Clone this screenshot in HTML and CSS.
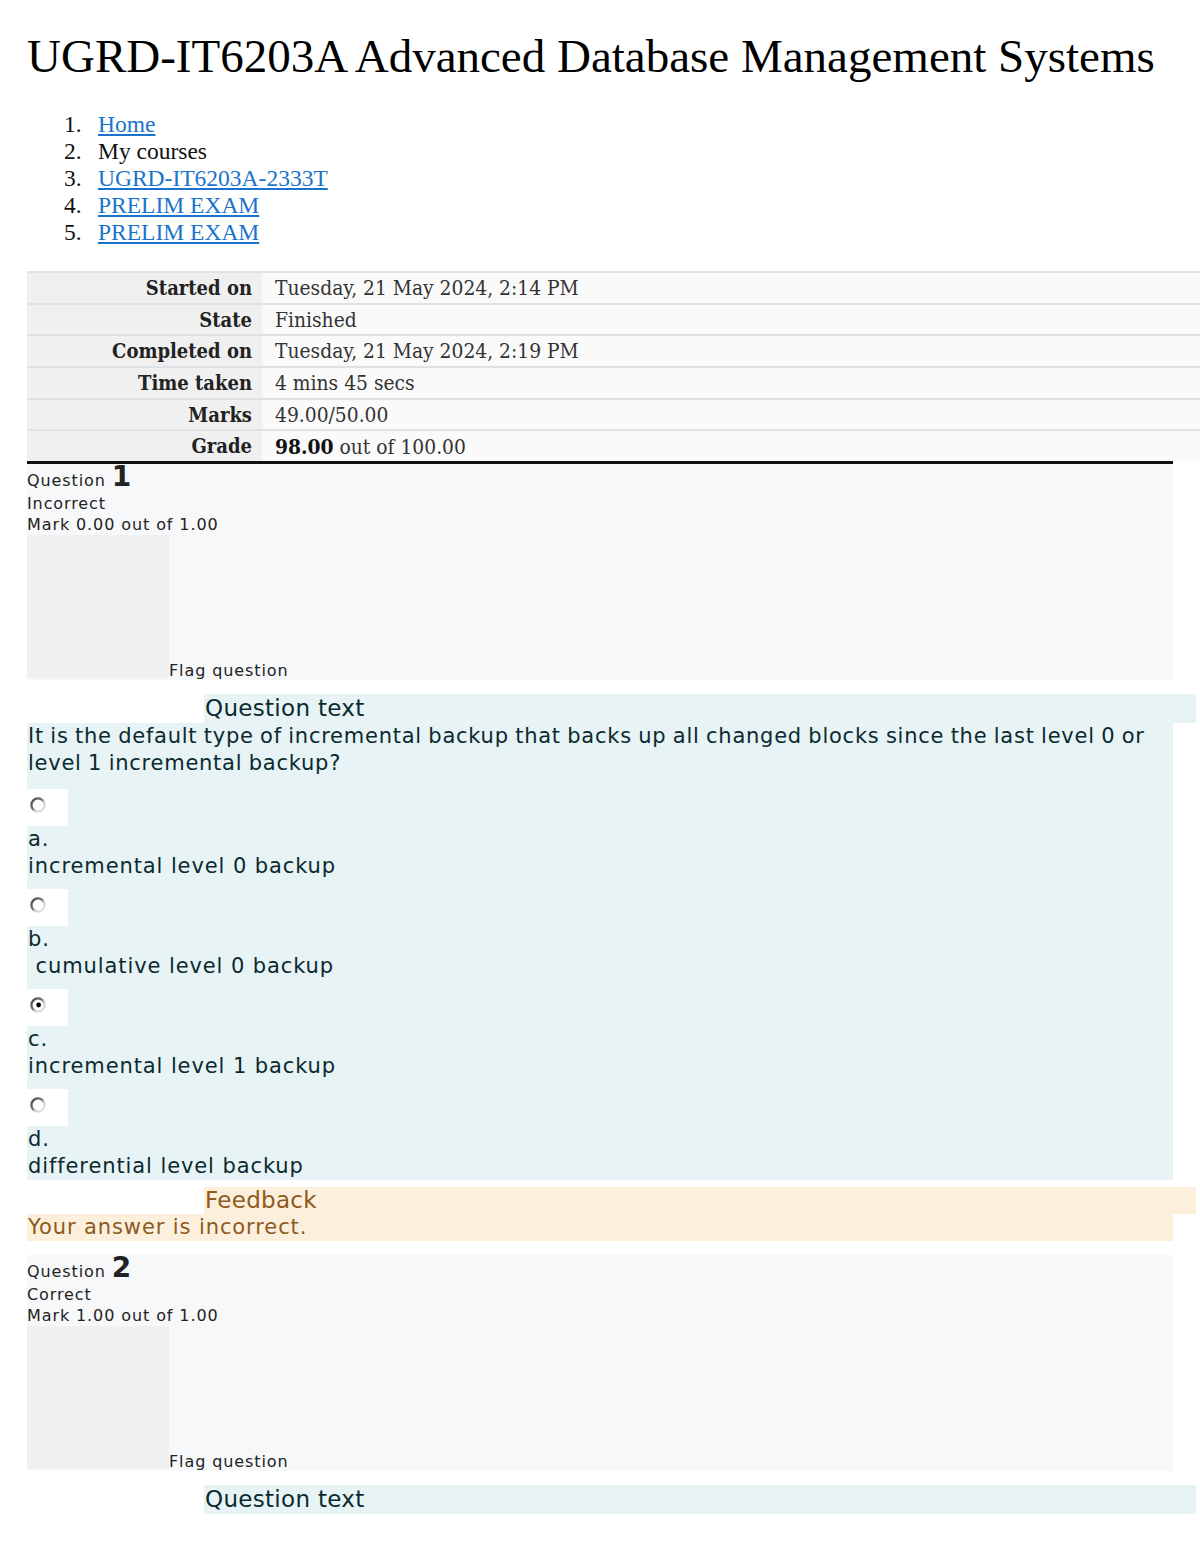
FILE: index.html
```html
<!DOCTYPE html>
<html lang="en">
<head>
<meta charset="utf-8">
<title>UGRD-IT6203A Advanced Database Management Systems</title>
<link rel="stylesheet" href="styles.css">
</head>
<body>
<svg class="defs" width="0" height="0" aria-hidden="true">
  <defs>
    <linearGradient id="ring" x1="0" y1="0" x2="1" y2="1">
      <stop offset="0" stop-color="#444"/>
      <stop offset="0.45" stop-color="#7a7a7a"/>
      <stop offset="0.62" stop-color="#cfcfcf"/>
      <stop offset="1" stop-color="#ececec"/>
    </linearGradient>
  </defs>
</svg>
<div class="page">
  <h1 class="title">UGRD-IT6203A Advanced Database Management Systems</h1>
  <ol class="crumbs">
    <li><a href="#">Home</a></li>
    <li>My courses</li>
    <li><a href="#">UGRD-IT6203A-2333T</a></li>
    <li><a href="#">PRELIM EXAM</a></li>
    <li><a href="#">PRELIM EXAM</a></li>
  </ol>

  <table class="summary">
    <tr><th>Started on</th><td>Tuesday, 21 May 2024, 2:14 PM</td></tr>
    <tr><th>State</th><td>Finished</td></tr>
    <tr><th>Completed on</th><td>Tuesday, 21 May 2024, 2:19 PM</td></tr>
    <tr><th>Time taken</th><td>4 mins 45 secs</td></tr>
    <tr><th>Marks</th><td>49.00/50.00</td></tr>
    <tr><th>Grade</th><td><b>98.00</b> out of 100.00</td></tr>
  </table>

  <div class="info first">
    <div class="qno">Question <span class="num">1</span></div>
    <div class="state">Incorrect</div>
    <div class="grade">Mark 0.00 out of 1.00</div>
    <div class="flagline"><span class="flagbox"></span><span class="flagtext">Flag question</span></div>
  </div>

  <h4 class="qhead">Question text</h4>
  <div class="content">
    <div class="qtext">It is the default type of incremental backup that backs up all changed blocks since the last level 0 or level 1 incremental backup?</div>
    <div class="opt">
      <span class="radiobox"><svg class="radio" viewBox="0 0 16 16" width="16" height="16"><circle cx="8" cy="8" r="6.6" fill="#fff" stroke="url(#ring)" stroke-width="2.4"/></svg></span>
      <div class="letter">a.</div>
      <div class="answer">incremental level 0 backup</div>
    </div>
    <div class="opt">
      <span class="radiobox"><svg class="radio" viewBox="0 0 16 16" width="16" height="16"><circle cx="8" cy="8" r="6.6" fill="#fff" stroke="url(#ring)" stroke-width="2.4"/></svg></span>
      <div class="letter">b.</div>
      <div class="answer">&nbsp;cumulative level 0 backup</div>
    </div>
    <div class="opt">
      <span class="radiobox"><svg class="radio" viewBox="0 0 16 16" width="16" height="16"><circle cx="8" cy="8" r="6.6" fill="#fff" stroke="url(#ring)" stroke-width="2.4"/><circle cx="8.6" cy="8" r="2.4" fill="#000"/></svg></span>
      <div class="letter">c.</div>
      <div class="answer">incremental level 1 backup</div>
    </div>
    <div class="opt">
      <span class="radiobox"><svg class="radio" viewBox="0 0 16 16" width="16" height="16"><circle cx="8" cy="8" r="6.6" fill="#fff" stroke="url(#ring)" stroke-width="2.4"/></svg></span>
      <div class="letter">d.</div>
      <div class="answer">differential level backup</div>
    </div>
  </div>

  <h4 class="fhead">Feedback</h4>
  <div class="feedback">Your answer is incorrect.</div>

  <div class="info second">
    <div class="qno">Question <span class="num">2</span></div>
    <div class="state">Correct</div>
    <div class="grade">Mark 1.00 out of 1.00</div>
    <div class="flagline"><span class="flagbox"></span><span class="flagtext">Flag question</span></div>
  </div>

  <h4 class="qhead">Question text</h4>
</div>
</body>
</html>
```

FILE: styles.css
```css
html {
  overflow-x: hidden;
}
body {
  margin: 0;
  background: #ffffff;
  color: #000000;
  font-family: "Liberation Serif", "Times New Roman", serif;
}
.defs {
  position: absolute;
  width: 0;
  height: 0;
}
.page {
  padding: 0 27px;
}
.title {
  margin: 0;
  padding-top: 27px;
  font-family: "Liberation Serif", "Times New Roman", serif;
  font-weight: normal;
  font-size: 47px;
  line-height: 58px;
  color: #000;
  white-space: nowrap;
}
.crumbs {
  margin: 26px 0 0 0;
  padding-left: 37px;
  list-style: none;
  counter-reset: crumb;
  font-family: "Liberation Serif", "Times New Roman", serif;
  font-size: 23.5px;
  line-height: 27px;
  color: #111;
}
.crumbs li {
  display: flex;
  counter-increment: crumb;
}
.crumbs li::before {
  content: counter(crumb) ".";
  width: 34px;
  flex: none;
}
.crumbs a {
  color: #1a74cc;
  text-decoration: underline;
}
.summary {
  margin-top: 25px;
  width: calc(100% + 27px);
  border-collapse: collapse;
  border-top: 2px solid #dee2e6;
  font-family: "DejaVu Serif", serif;
  font-stretch: condensed;
  font-size: 20px;
}
.summary tr {
  border-bottom: 2px solid #dee2e6;
}
.summary tr:last-child {
  border-bottom: 0;
}
.summary th {
  width: 225px;
  padding: 0 10px 0 0;
  height: 29.7px;
  text-align: right;
  font-weight: bold;
  background: #f0f0f0;
  color: #222;
  white-space: nowrap;
}
.summary td {
  padding: 0 0 0 13px;
  height: 29.7px;
  background: #fafafa;
  color: #333;
  font-size: 20.8px;
  white-space: nowrap;
}
.summary td b {
  color: #111;
}
.info {
  background: #f7f8fa;
  border-top: 3px solid #111;
  font-family: "DejaVu Sans", Verdana, sans-serif;
  font-size: 16px;
  letter-spacing: 0.9px;
  line-height: 21px;
  color: #222;
  padding-bottom: 2px;
}
.info.second {
  border-top: 0;
  margin-top: 14px;
}
.qno {
  line-height: 25px;
}
.num {
  font-weight: bold;
  font-size: 28px;
  letter-spacing: 0;
}
.flagline {
  display: flex;
  align-items: flex-end;
}
.flagbox {
  display: block;
  width: 142px;
  height: 143px;
  background: #f0f0f0;
}
.flagtext {
  line-height: 21px;
  margin-bottom: -3px;
}
.qhead,
.fhead {
  margin: 14px -23px 0 177px;
  padding-left: 1px;
  font-family: "DejaVu Sans", Verdana, sans-serif;
  font-weight: normal;
  font-size: 23px;
  letter-spacing: 0.3px;
  line-height: 29px;
  background: #e7f3f5;
  color: #0b2a2f;
}
.fhead {
  margin-top: 7px;
  background: #fcefdc;
  color: #8e5a1e;
  line-height: 27px;
}
.content {
  background: #e7f3f5;
  font-family: "DejaVu Sans", Verdana, sans-serif;
  font-size: 20px;
  line-height: 27px;
  color: #0b2a2f;
  padding-left: 1px;
}
.qtext {
  font-size: 21px;
  letter-spacing: 0.75px;
  word-spacing: -1px;
  padding-bottom: 3px;
}
.opt {
  padding-top: 9px;
  font-size: 21px;
  letter-spacing: 0.9px;
}
.radiobox {
  display: block;
  width: 41px;
  height: 37px;
  margin-left: -1px;
  background: #fff;
  position: relative;
}
.radio {
  display: block;
  position: absolute;
  left: 3px;
  top: 8px;
}
.feedback {
  background: #fcefdc;
  color: #8e5a1e;
  font-family: "DejaVu Sans", Verdana, sans-serif;
  font-size: 21px;
  letter-spacing: 0.9px;
  line-height: 27px;
  padding-left: 1px;
}
```
